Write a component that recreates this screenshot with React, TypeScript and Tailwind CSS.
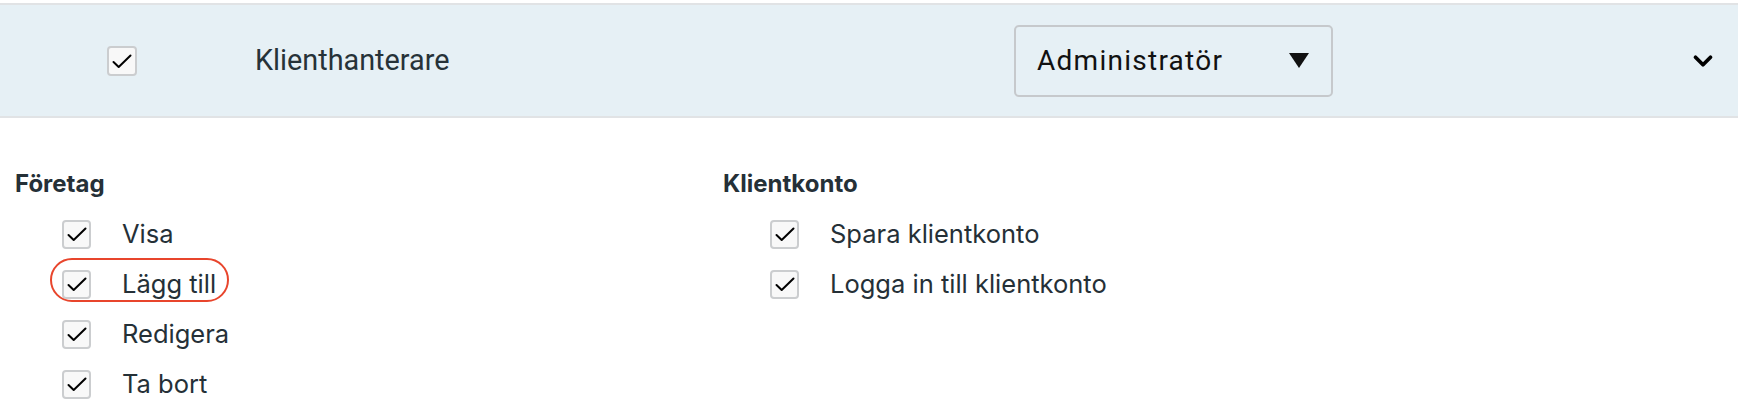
import { ChevronDown } from "lucide-react";

function Check({ big = false }: { big?: boolean }) {
  return (
    <span
      className={`flex shrink-0 items-center justify-center rounded-[4px] border-2 border-[#cbcdcf] bg-[#f8f8f8] ${
        big ? "h-[30px] w-[30px]" : "h-[29px] w-[29px]"
      }`}
    >
      <svg viewBox="0 0 24 24" className="h-[24px] w-[24px]" fill="none">
        <path d="M3.5 13l5.2 5L20.5 6.5" stroke="#000" strokeWidth="2" strokeLinecap="round" strokeLinejoin="round" />
      </svg>
    </span>
  );
}

function Item({ label, ring = false }: { label: string; ring?: boolean }) {
  return (
    <div className="relative flex h-[32px] items-center">
      {ring && (
        <span className="absolute left-[-12px] top-[-10px] h-[44px] w-[179px] rounded-full border-2 border-[#e8452c]" />
      )}
      <Check />
      <span className="ml-[31px] whitespace-nowrap text-[25.5px] leading-[32px] text-[#253037]">{label}</span>
    </div>
  );
}

function Group({ title, items, ringAt }: { title: string; items: string[]; ringAt?: number }) {
  return (
    <div className="flex flex-col gap-[18px]">
      <h3 className="text-[24px] font-bold leading-[32px] text-[#253037]">{title}</h3>
      <div className="flex flex-col gap-[18px] pl-[47px]">
        {items.map((it, i) => (
          <Item key={it} label={it} ring={i === ringAt} />
        ))}
      </div>
    </div>
  );
}

export default function App() {
  return (
    <div className="h-[412px] w-[1738px] overflow-hidden bg-white pt-[3px] font-['Inter',sans-serif]">
      <div className="flex h-[115px] items-center border-y-2 border-[#e1e3e5] bg-[#e6f0f5]">
        <div className="ml-[107px] w-[148px]">
          <Check big />
        </div>
        <span className="w-[759px] font-['Roboto',sans-serif] text-[28.8px] text-[#263238]">Klienthanterare</span>
        <div className="flex h-[72px] w-[319px] items-center justify-between rounded-[5px] border-2 border-[#c6c9cc] pl-[21px] pr-[22px] font-['Roboto',sans-serif] text-[28px] text-[#111]">
          <span className="tracking-[0.045em]">Administratör</span>
          <svg viewBox="0 0 20 15" className="h-[15px] w-[20px]">
            <polygon points="0,0 20,0 10,15" fill="#111" />
          </svg>
        </div>
        <ChevronDown className="ml-auto mr-[20px] h-[30px] w-[30px] text-black" strokeWidth={3} />
      </div>
      <div className="flex pl-[15px] pt-[50px]">
        <div className="w-[708px]">
          <Group title="Företag" items={["Visa", "Lägg till", "Redigera", "Ta bort"]} ringAt={1} />
        </div>
        <Group title="Klientkonto" items={["Spara klientkonto", "Logga in till klientkonto"]} />
      </div>
    </div>
  );
}
